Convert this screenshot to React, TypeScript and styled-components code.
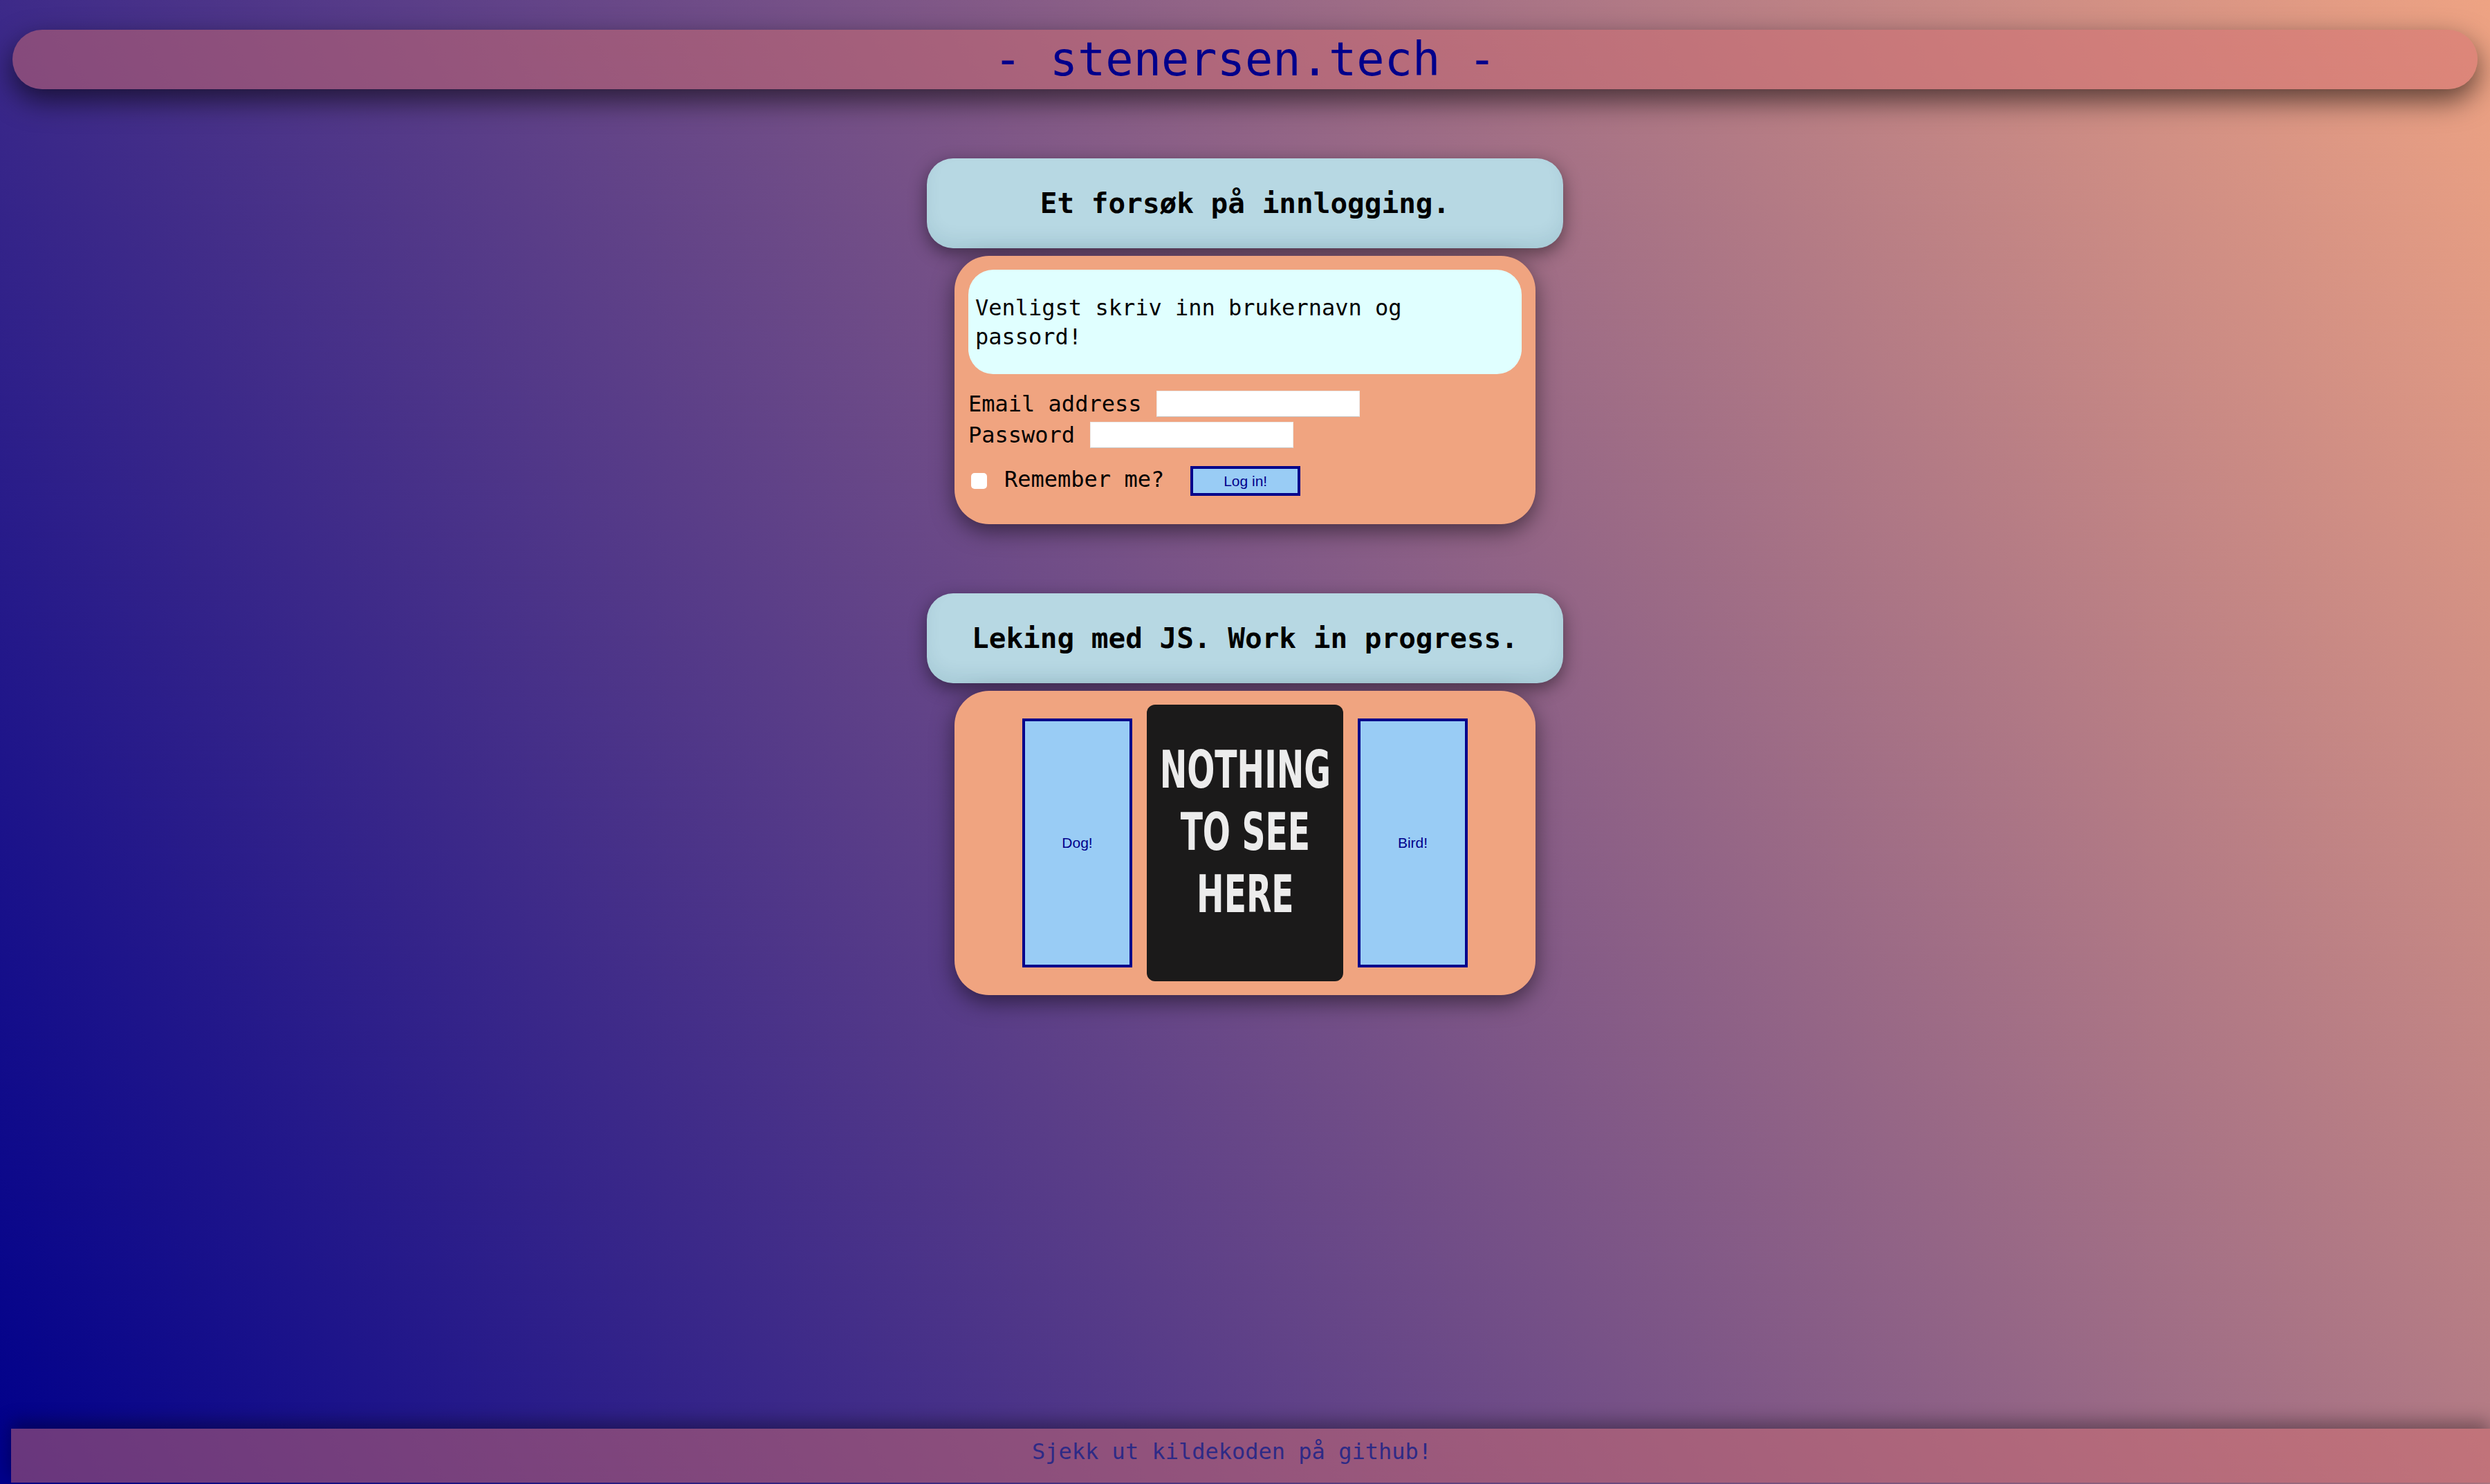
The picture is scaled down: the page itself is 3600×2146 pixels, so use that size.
import React from 'react'
import styled, { createGlobalStyle } from 'styled-components'

const GlobalStyle = createGlobalStyle`
  html, body {
    margin: 0;
    padding: 0;
    height: 100%;
  }
  #root {
    min-height: 100%;
  }
`

const Page = styled.div`
  box-sizing: border-box;
  display: flex;
  flex-direction: column;
  min-height: 100vh;
  padding-top: 43px;
  background: linear-gradient(60deg, #00008b 0%, #eea383 100%);
  font-family: 'DejaVu Sans Mono', 'Liberation Mono', monospace;
  color: #000;
`

const Header = styled.header`
  display: flex;
  align-items: center;
  justify-content: center;
  height: 86px;
  margin: 0 18px;
  border-radius: 43px;
  background: rgba(208, 107, 111, 0.5);
  box-shadow: 0 16px 40px rgba(0, 0, 0, 0.6);
  color: #00008b;
  font-size: 67px;
  white-space: pre;
`

const Main = styled.main`
  flex: 1;
  display: flex;
  flex-direction: column;
  align-items: center;
  padding: 100px 0 60px;
  gap: 100px;
`

const Section = styled.section`
  display: flex;
  flex-direction: column;
  align-items: center;
  gap: 11px;
`

const Heading = styled.h2`
  box-sizing: border-box;
  display: flex;
  align-items: center;
  justify-content: center;
  width: 920px;
  height: 130px;
  margin: 0;
  border-radius: 38px;
  background: #b7d8e3;
  box-shadow: 0 8px 26px rgba(0, 0, 0, 0.45), inset 0 -14px 22px rgba(0, 60, 90, 0.08);
  font-size: 41px;
  font-weight: bold;
  white-space: pre;
`

const Panel = styled.div<{ $pad: string }>`
  box-sizing: border-box;
  width: 840px;
  padding: ${({ $pad }) => $pad};
  border-radius: 50px;
  background: #f0a480;
  box-shadow: 0 10px 32px rgba(0, 0, 0, 0.5);
`

const Notice = styled.p`
  box-sizing: border-box;
  height: 151px;
  margin: 0;
  padding: 34px 10px 0;
  border-radius: 36px;
  background: #e0ffff;
  font-size: 32px;
  line-height: 42px;
`

const FieldRow = styled.div<{ $top?: number }>`
  display: flex;
  align-items: center;
  height: 45px;
  margin-top: ${({ $top }) => $top ?? 0}px;
  font-size: 32px;
  white-space: pre;
`

const TextInput = styled.input`
  box-sizing: border-box;
  width: 294px;
  height: 38px;
  margin: 0 0 0 22px;
  border: 1px solid rgba(0, 0, 0, 0.08);
  border-bottom-color: rgba(0, 0, 0, 0.22);
  background: #fff;
  outline: none;
`

const ActionRow = styled.div`
  display: flex;
  align-items: center;
  height: 43px;
  margin-top: 23px;
  font-size: 32px;
  white-space: pre;
`

const Check = styled.input`
  appearance: none;
  width: 23px;
  height: 23px;
  margin: 0 0 0 4px;
  border-radius: 5px;
  background: #fff;
`

const CheckLabel = styled.label`
  margin-left: 25px;
  transform: translateY(-3px);
`

const BlueButton = styled.button`
  box-sizing: border-box;
  width: 159px;
  height: 43px;
  margin-left: 38px;
  padding: 0;
  border: 4px solid #00008b;
  background: #99ccf5;
  color: #00008b;
  font-family: 'Liberation Sans', Arial, sans-serif;
  font-size: 21px;
`

const Stage = styled.div`
  display: flex;
  align-items: center;
  justify-content: center;
  gap: 21px;
`

const Card = styled.div`
  box-sizing: border-box;
  display: flex;
  align-items: center;
  justify-content: center;
  width: 159px;
  height: 360px;
  border: 4px solid #00008b;
  background: #99ccf5;
  color: #00008b;
  font-family: 'Liberation Sans', Arial, sans-serif;
  font-size: 21px;
`

const Sign = styled.div`
  box-sizing: border-box;
  display: flex;
  flex-direction: column;
  align-items: center;
  width: 284px;
  height: 400px;
  padding-top: 49px;
  border-radius: 12px;
  background: #1b1a1a;
  overflow: hidden;
`

const SignText = styled.div`
  color: #ececec;
  font-family: 'DejaVu Sans', sans-serif;
  font-weight: bold;
  font-size: 75px;
  line-height: 90px;
  text-align: center;
  white-space: pre;
  transform: scaleX(0.63);
`

const Footer = styled.footer`
  box-sizing: border-box;
  display: flex;
  align-items: center;
  justify-content: center;
  height: 78px;
  margin: 0 0 2px 16px;
  padding: 0 54px 12px 0;
  background: rgba(208, 107, 111, 0.5);
  box-shadow: 0 -10px 26px rgba(0, 0, 0, 0.35);
  color: #2e2a86;
  font-size: 32px;
`

export default function App() {
  return (
    <>
      <GlobalStyle />
      <Page>
        <Header>- stenersen.tech -</Header>
        <Main>
          <Section>
            <Heading>Et forsøk på innlogging.</Heading>
            <Panel $pad="20px 20px 41px">
              <Notice>Venligst skriv inn brukernavn og passord!</Notice>
              <FieldRow $top={20}>
                Email address
                <TextInput type="email" />
              </FieldRow>
              <FieldRow>
                Password
                <TextInput type="password" />
              </FieldRow>
              <ActionRow>
                <Check type="checkbox" id="remember" />
                <CheckLabel htmlFor="remember">Remember me?</CheckLabel>
                <BlueButton>Log in!</BlueButton>
              </ActionRow>
            </Panel>
          </Section>
          <Section>
            <Heading>Leking med JS. Work in progress.</Heading>
            <Panel $pad="20px">
              <Stage>
                <Card>Dog!</Card>
                <Sign>
                  <SignText>
                    NOTHING
                    {'\n'}TO SEE
                    {'\n'}HERE
                  </SignText>
                </Sign>
                <Card>Bird!</Card>
              </Stage>
            </Panel>
          </Section>
        </Main>
        <Footer>Sjekk ut kildekoden på github!</Footer>
      </Page>
    </>
  )
}
